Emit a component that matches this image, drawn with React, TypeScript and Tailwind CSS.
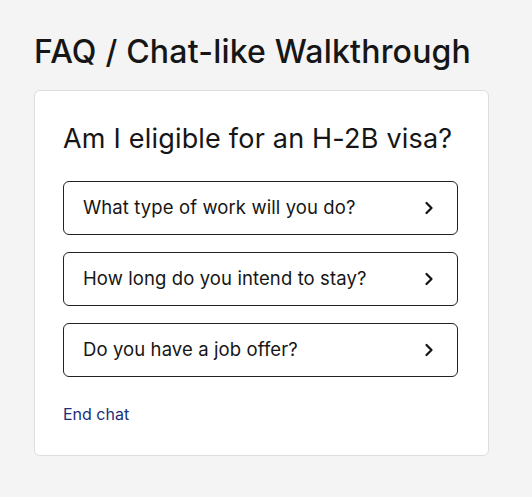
import { ChevronRight } from 'lucide-react';

const questions = [
    'What type of work will you do?',
    'How long do you intend to stay?',
    'Do you have a job offer?',
];

export default function App() {
    return (
        <div className="min-h-[497px] bg-[#f4f4f4] px-[34px] pt-[33px] font-['Inter',sans-serif] text-[#161616]">
            <h1 className="text-[32px] leading-[38px] font-medium tracking-[0.2px]">FAQ / Chat-like Walkthrough</h1>

            <div className="mt-[19px] w-[455px] h-[366px] rounded-[6px] border border-[#dedede] bg-white px-[28px] pt-[31px]">
                <h2 className="text-[27px] leading-[34px] font-normal tracking-[0.2px]">Am I eligible for an H-2B visa?</h2>

                <div className="mt-[25px] flex flex-col gap-[17px]">
                    {questions.map((q) => (
                        <button
                            key={q}
                            className="flex h-[54px] w-[395px] items-center justify-between rounded-[6px] border border-[#222] bg-white pl-[19px] pr-[18px] text-left text-[18.5px] tracking-[0.1px] text-[#161616]"
                        >
                            <span>{q}</span>
                            <ChevronRight size={20} strokeWidth={2.75} />
                        </button>
                    ))}
                </div>

                <a href="#" className="mt-[25px] inline-block text-[16px] text-[#1a2f7a]">
                    End chat
                </a>
            </div>
        </div>
    );
}
